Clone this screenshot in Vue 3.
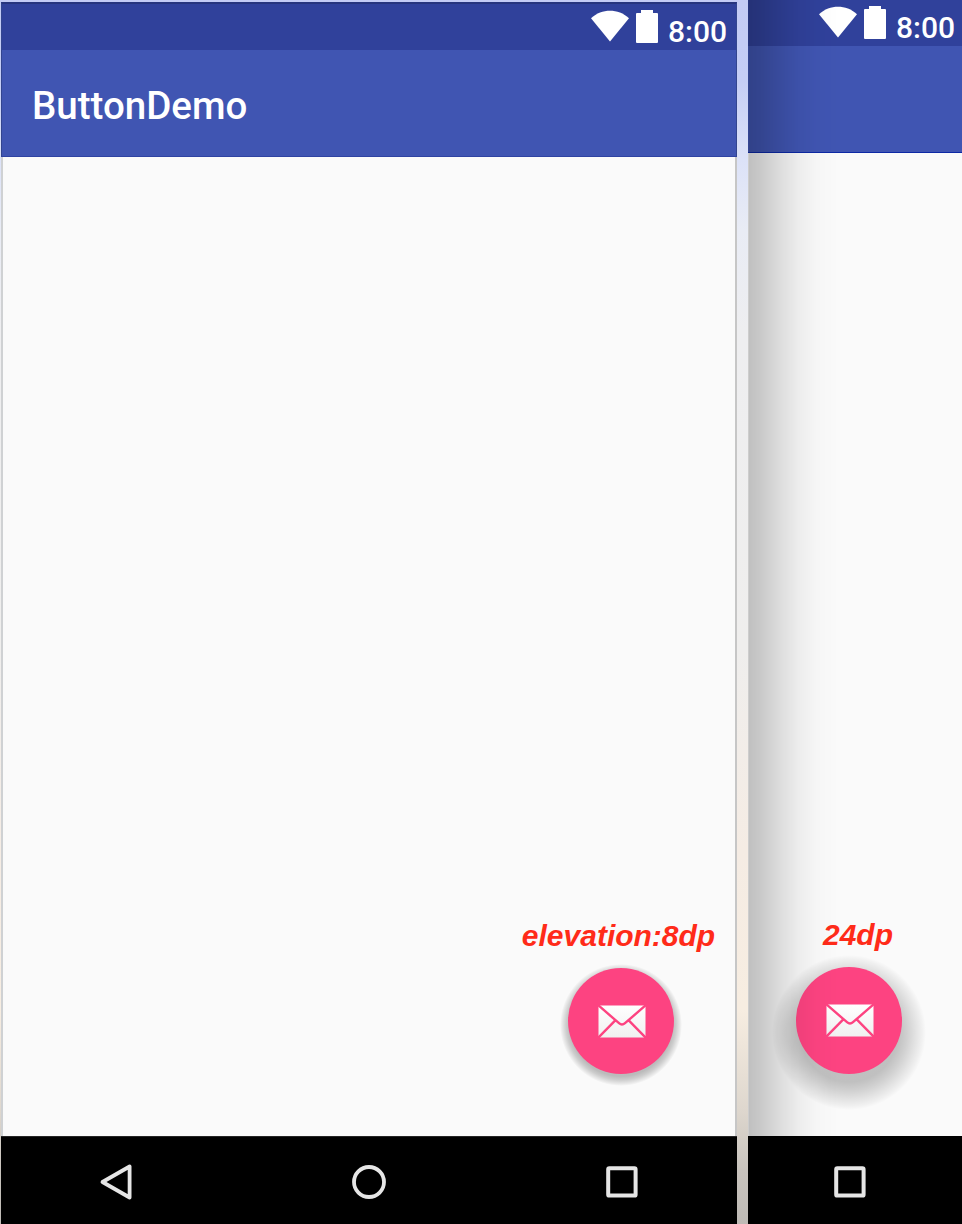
<script setup>
const phones = [
  { id: 'left', title: 'ButtonDemo', label: 'elevation:8dp', full: true },
  { id: 'right', title: '', label: '24dp', full: false },
]
</script>

<template>
  <main class="stage">
    <section v-for="p in phones" :key="p.id" class="phone" :class="p.id">
      <header class="status">
        <svg class="wifi" width="40" height="32" viewBox="0 0 40 32">
          <path d="M1 8.2C12 -1.6 28 -1.6 39 8.2L20 31.4Z" fill="#fff" />
        </svg>
        <svg class="battery" width="22" height="33" viewBox="0 0 22 33">
          <path d="M5 0H17V3H21Q22 3 22 4V32Q22 33 21 33H1Q0 33 0 32V4Q0 3 1 3H5Z" fill="#fff" />
        </svg>
        <span class="time">8:00</span>
      </header>
      <div class="appbar"><h1 v-if="p.title" class="title">{{ p.title }}</h1></div>
      <div class="content">
        <span class="label">{{ p.label }}</span>
        <button class="fab" aria-label="Mail">
          <svg class="mail" width="48" height="33" viewBox="0 0 48 33">
            <defs>
              <linearGradient :id="'paper-' + p.id" x1="0" y1="0" x2="0" y2="1">
                <stop offset="0" stop-color="#fff" />
                <stop offset="1" stop-color="#f0f0f0" />
              </linearGradient>
            </defs>
            <rect x=".5" y=".5" width="47" height="32" rx="1.5" :fill="'url(#paper-' + p.id + ')'" />
            <path d="M0 0L2.5 2.2L21 18.2Q24 20.8 27 18.2L45.5 2.2L48 0M0 33L16.8 15.8M48 33L31.2 15.8" fill="none" stroke="#fd4381" stroke-width="2.4" />
          </svg>
        </button>
      </div>
      <nav class="nav">
        <svg v-if="p.full" class="back" width="36" height="40" viewBox="0 0 36 40">
          <path d="M4.5 20L31.6 4.5V35.5Z" fill="none" stroke="#e6e6e6" stroke-width="3.8" stroke-linejoin="round" />
        </svg>
        <svg v-if="p.full" class="home" width="36" height="36" viewBox="0 0 36 36">
          <circle cx="18" cy="18" r="15" fill="none" stroke="#e6e6e6" stroke-width="3.8" />
        </svg>
        <svg class="recent" width="32" height="32" viewBox="0 0 32 32">
          <rect x="2.2" y="2.2" width="27.4" height="27.4" rx="1.2" fill="none" stroke="#e6e6e6" stroke-width="4" />
        </svg>
      </nav>
    </section>
  </main>
</template>

<style>
body { margin: 0; }
</style>

<style scoped>
.stage {
  display: flex;
  gap: 11px;
  box-sizing: border-box;
  width: 962px;
  height: 1224px;
  padding-left: 1px;
  overflow: hidden;
  background: linear-gradient(#c3cbf5 0, #c5cdf5 80px, #dce2f8 160px, #e9ecf5 230px, #eeeef0 330px, #efeeed 650px, #f5ece4 850px, #f7ede1 1010px, #ded7ce 1110px, #c8c3bd 1170px, #bebab5 1224px);
}
.phone {
  position: relative;
  display: grid;
  grid-template-columns: 100%;
  flex: none;
  box-sizing: border-box;
}
.left {
  width: 736px;
  height: 1222px;
  margin-top: 2px;
  grid-template-rows: 48px 107px 979px 88px;
}
.right {
  width: 214px;
  height: 1224px;
  grid-template-rows: 46px 107px 983px 88px;
}
.right::after {
  content: '';
  position: absolute;
  inset: 0 auto 0 0;
  box-sizing: border-box;
  width: 90px;
  pointer-events: none;
  border-left: 1px solid rgba(0, 0, 0, .18);
  background: linear-gradient(90deg, rgba(0, 0, 0, .23) 0, rgba(0, 0, 0, .19) 14px, rgba(0, 0, 0, .11) 33px, rgba(0, 0, 0, .05) 50px, rgba(0, 0, 0, .015) 68px, transparent 90px);
}
.status {
  display: flex;
  align-items: flex-start;
  justify-content: flex-end;
  box-sizing: border-box;
  padding-right: 9px;
  background: #30419b;
}
.left .status { border-top: 2px solid #27357e; }
.wifi { margin: 6px 6px 0 0; }
.battery { margin: 6px 10px 0 0; }
.right .status { padding-right: 7px; }
.time {
  margin-top: 11px;
  font: 500 30px/34px Roboto, sans-serif;
  color: #fff;
}
.appbar {
  box-sizing: border-box;
  display: flex;
  align-items: center;
  padding: 5px 0 0 30px;
  background: #4055b2;
  border-bottom: 1px solid #2f43a2;
}
.right .appbar { border-bottom-color: #0c28a4; }
.left .status, .left .appbar { border-right: 1px solid #33458f; border-left: 1px solid #33458f; }
.title {
  margin: 0;
  font: 500 38.5px/48px Roboto, sans-serif;
  color: #fff;
}
.content {
  position: relative;
  isolation: isolate;
  display: flex;
  flex-direction: column;
  align-items: center;
  justify-content: flex-end;
  box-sizing: border-box;
  background: #fafafa;
}
.left .content {
  padding: 0 0 62px 504px;
  border-left: 2px solid #cfd1d3;
  border-right: 2px solid #c6c6c6;
}
.right .content { padding: 0 12px 62.5px 0; }
.label {
  margin-bottom: 15px;
  font: italic 700 30px/34px "Liberation Sans", Arial, sans-serif;
  white-space: nowrap;
  color: #ff2b19;
}
.right .label { margin: 0 0 15px 18px; }
.left .label { margin-right: 5px; }
.fab {
  position: relative;
  display: grid;
  place-items: center;
  width: 106.5px;
  height: 106.5px;
  padding: 0;
  border: 0;
  border-radius: 50%;
  background: #fd4381;
}
.fab::before {
  content: '';
  position: absolute;
  z-index: -1;
  border-radius: 50%;
}
.left .fab::before {
  inset: -4px -8px -12px;
  background: radial-gradient(closest-side, rgba(0, 0, 0, .25) 84%, rgba(0, 0, 0, .18) 90%, rgba(0, 0, 0, .06) 97%, transparent 100%);
}
.right .fab::before {
  inset: -12px -24px -36px;
  background: radial-gradient(closest-side, rgba(0, 0, 0, .23) 64%, rgba(0, 0, 0, .17) 75%, rgba(0, 0, 0, .09) 87%, rgba(0, 0, 0, .04) 95%, transparent 100%);
}
.mail { display: block; margin: 1px 0 0 1px; }
.nav {
  display: flex;
  align-items: center;
  justify-content: space-between;
  box-sizing: border-box;
  padding: 3px 99px 0 97px;
  background: #000;
}
.home { margin-right: 2px; }
.left .nav { border-top: 1px solid #252525; }
.right .nav { justify-content: flex-end; padding: 4px 96px 0 0; }
</style>
